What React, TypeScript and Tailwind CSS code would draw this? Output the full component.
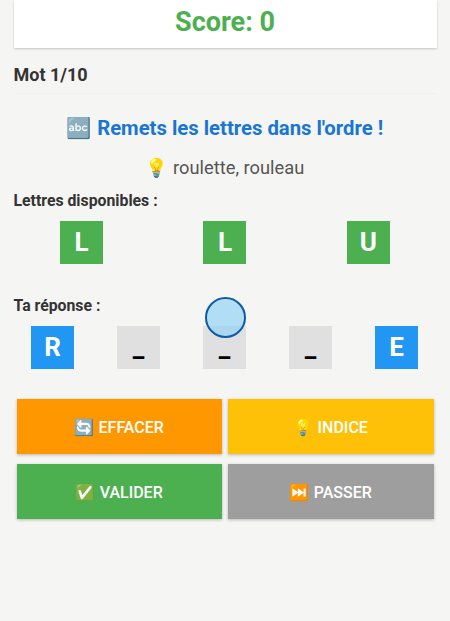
const EMOJI = "font-['Roboto','Noto_Color_Emoji','sans-serif']";

function Tile({ ch, color }: { ch: string; color: string }) {
  return (
    <div className={`w-[43px] h-[43px] flex items-center justify-center text-white text-[26px] font-bold ${color}`}>
      {ch}
    </div>
  );
}

function Blank() {
  return (
    <div className="w-[43px] h-[43px] flex items-center justify-center bg-[#e0e0e0] text-black text-[26px] font-bold">
      _
    </div>
  );
}

function Btn({ label, color }: { label: string; color: string }) {
  return (
    <button className={`h-[55px] flex-1 flex items-center justify-center pt-[2px] text-white text-[16px] font-medium shadow-[0_1px_3px_rgba(0,0,0,0.25)] ${color}`}>
      {label}
    </button>
  );
}

export default function App() {
  return (
    <div className={`w-[450px] h-[621px] relative overflow-hidden bg-[#f5f5f3] px-[13.5px] ${EMOJI}`}>
      <div className="h-[48px] pb-[4px] bg-white flex items-center justify-center text-[#4caf50] text-[27px] font-bold shadow-[0_1px_2px_rgba(0,0,0,0.2)]">
        Score: 0
      </div>
      <div className="mt-[17px] text-[#333333] text-[18px] font-bold leading-5">Mot 1/10</div>
      <div className="mt-[8px] h-px bg-[#f0f0ee]" />
      <div className="mt-[22px] text-center text-[#1976d2] text-[20.3px] font-bold leading-6">🔤 Remets les lettres dans l'ordre !</div>
      <div className="mt-[16px] text-center text-[#555555] text-[18.3px] leading-6">💡 roulette, rouleau</div>
      <div className="mt-[11px] text-[#333333] text-[15.8px] font-bold leading-5">Lettres disponibles :</div>
      <div className="mt-[10px] -mx-[3.5px] flex justify-around">
        <Tile ch="L" color="bg-[#4caf50]" />
        <Tile ch="L" color="bg-[#4caf50]" />
        <Tile ch="U" color="bg-[#4caf50]" />
      </div>
      <div className="mt-[32px] text-[#333333] text-[15.8px] font-bold leading-5">Ta réponse :</div>
      <div className="mt-[10px] flex gap-[43px] pl-[17.5px]">
        <Tile ch="R" color="bg-[#2196f3]" />
        <Blank />
        <Blank />
        <Blank />
        <Tile ch="E" color="bg-[#2196f3]" />
      </div>
      <div className="mt-[30px] flex gap-[6px] px-[3px]">
        <Btn label="🔄 EFFACER" color="bg-[#ff9800]" />
        <Btn label="💡 INDICE" color="bg-[#ffc107]" />
      </div>
      <div className="mt-[10px] flex gap-[6px] px-[3px]">
        <Btn label="✅ VALIDER" color="bg-[#4caf50]" />
        <Btn label="⏭️ PASSER" color="bg-[#9e9e9e]" />
      </div>
      <div className="absolute left-[205px] top-[297px] w-[41px] h-[41px] rounded-full bg-[#85cff7]/60 border-2 border-[#0d5aa7]" />
    </div>
  );
}
